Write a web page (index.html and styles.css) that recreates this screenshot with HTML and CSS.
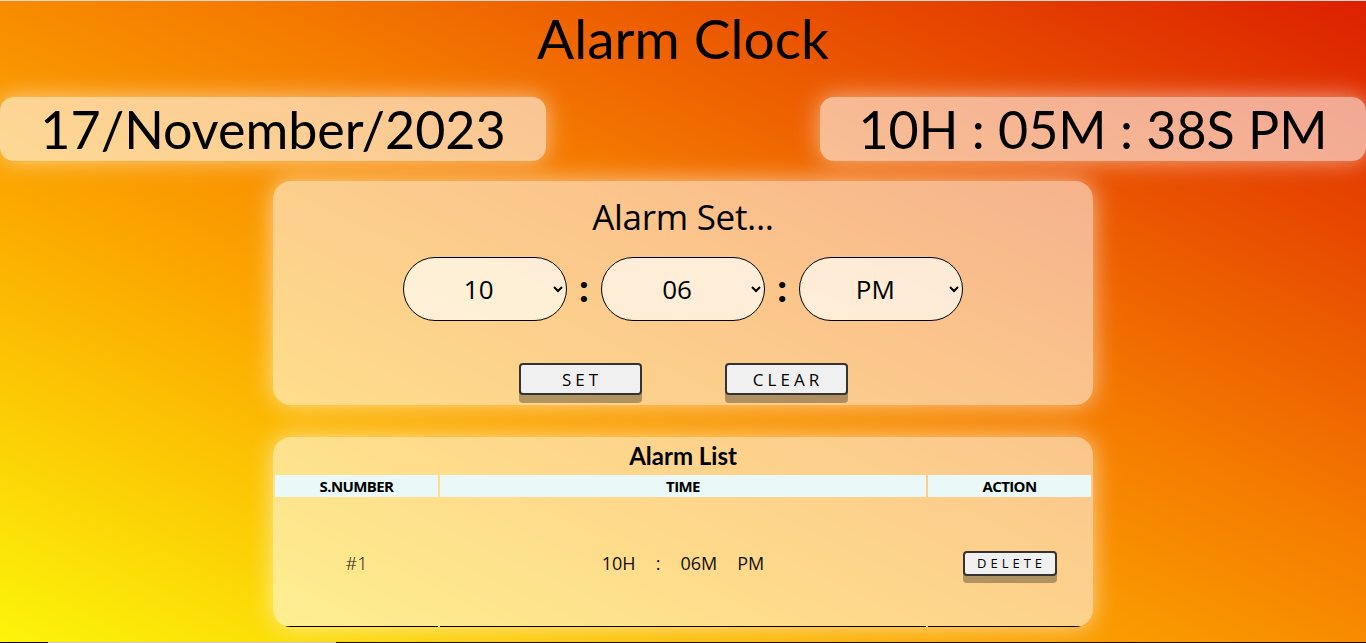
FILE: index.html
```html
<!DOCTYPE html>
<html lang="en">
<head>
<meta charset="utf-8">
<title>Alarm Clock</title>
<link rel="stylesheet" href="styles.css">
</head>
<body>
<div class="page">
  <h1 class="title">Alarm Clock</h1>
  <div class="now-row">
    <div class="now-box">17/November/2023</div>
    <div class="now-box">10H&nbsp;: 05M&nbsp;: 38S PM</div>
  </div>
  <section class="card set-card">
    <h2 class="set-title">Alarm Set...</h2>
    <div class="pickers">
      <select class="pick"><option>10</option></select>
      <span class="colon">:</span>
      <select class="pick"><option>06</option></select>
      <span class="colon">:</span>
      <select class="pick"><option>PM</option></select>
    </div>
    <div class="actions">
      <button class="btn">SET</button>
      <button class="btn">CLEAR</button>
    </div>
  </section>
  <section class="card list-card">
    <h3 class="list-title">Alarm List</h3>
    <table class="alarms">
      <thead>
        <tr><th class="c-num">S.NUMBER</th><th>TIME</th><th class="c-act">ACTION</th></tr>
      </thead>
      <tbody>
        <tr>
          <td class="c-hash">#1</td>
          <td class="c-time">10H &nbsp; : &nbsp; 06M &nbsp; PM</td>
          <td><button class="btn btn-small">DELETE</button></td>
        </tr>
      </tbody>
    </table>
  </section>
  <div class="below"><span class="below-grey"></span></div>
</div>
</body>
</html>
```

FILE: styles.css
```css
* { box-sizing: border-box; }
html, body { margin: 0; padding: 0; }
body {
  min-height: 643px;
  font-family: Lato, "Open Sans", sans-serif;
  color: #000;
  background: linear-gradient(to top right, #fcf50a 0%, #fca800 35%, #f57c00 58%, #dc2000 100%);
  border-top: 1px solid #d8d8d8;
  overflow: hidden;
}
.page {
  display: flex;
  flex-direction: column;
  align-items: center;
}
.title {
  margin: 4px 0 0;
  height: 92px;
  font-size: 55px;
  font-weight: 400;
  line-height: 66px;
  text-align: center;
}
.now-row {
  width: 100%;
  display: flex;
  justify-content: space-between;
}
.now-box {
  width: 546px;
  height: 64px;
  border-radius: 14px;
  background: rgba(255, 255, 255, 0.58);
  box-shadow: 0 0 24px rgba(255, 255, 255, 0.55);
  font-size: 52px;
  line-height: 64px;
  text-align: center;
}
.card {
  width: 820px;
  border-radius: 18px;
  background: rgba(255, 255, 255, 0.55);
  box-shadow: 0 0 24px rgba(255, 255, 255, 0.6);
}
.set-card {
  margin-top: 20px;
  height: 224px;
  display: flex;
  flex-direction: column;
  align-items: center;
  padding-top: 14px;
}
.set-title {
  margin: 0;
  font-family: "Open Sans", sans-serif;
  font-size: 35px;
  font-weight: 500;
  line-height: 44px;
  letter-spacing: -0.3px;
}
.pickers {
  margin-top: 18px;
  display: flex;
  align-items: center;
  gap: 12px;
}
.pick {
  width: 164px;
  height: 64px;
  border: 1px solid #000;
  border-radius: 32px;
  background: rgba(255, 250, 240, 0.75);
  font-family: "Open Sans", sans-serif;
  font-size: 26px;
  text-align: center;
  text-align-last: center;
  padding: 0 10px;
  color: #000;
}
.colon {
  font-size: 40px;
  font-weight: 700;
  line-height: 40px;
  margin-top: -4px;
}
.actions {
  margin-top: 42px;
  display: flex;
  gap: 83px;
}
.btn {
  width: 123px;
  height: 32px;
  border: 2px solid #333;
  border-radius: 4px;
  background: #f0f0f0;
  box-shadow: 0 8px 0 rgba(0, 0, 0, 0.3);
  font-family: "Open Sans", sans-serif;
  font-size: 17px;
  letter-spacing: 4px;
  padding: 0 0 0 4px;
  color: #000;
}
.list-card {
  margin-top: 32px;
  height: 190px;
  overflow: hidden;
  padding-top: 4px;
}
.list-title {
  margin: 0;
  text-align: center;
  font-size: 24px;
  font-weight: 700;
  line-height: 30px;
}
.alarms {
  width: 100%;
  border-spacing: 2px;
  margin-top: 2px;
}
.alarms th {
  background: #eaf8f8;
  font-family: "Open Sans", sans-serif;
  font-size: 15px;
  font-weight: 700;
  letter-spacing: -0.6px;
  height: 22px;
  padding: 0;
}
.alarms .c-num, .alarms .c-act { width: 163px; }
.alarms td {
  height: 128px;
  text-align: center;
  font-family: "Open Sans", sans-serif;
  font-size: 18px;
  font-weight: 400;
  border-bottom: 1px solid #000;
  padding: 0;
  color: #111;
}
.alarms .c-hash { font-weight: 300; }
.alarms .c-time { word-spacing: 2px; }
.btn-small {
  width: 94px;
  height: 25px;
  font-size: 13px;
  letter-spacing: 4px;
  box-shadow: 0 7px 0 rgba(0, 0, 0, 0.3);
}
.below {
  margin-top: 15px;
  width: 100%;
  height: 2px;
  background: #111;
  display: flex;
}
.below-grey {
  margin-left: 48px;
  width: 288px;
  background: #c8c8c8;
}
```
